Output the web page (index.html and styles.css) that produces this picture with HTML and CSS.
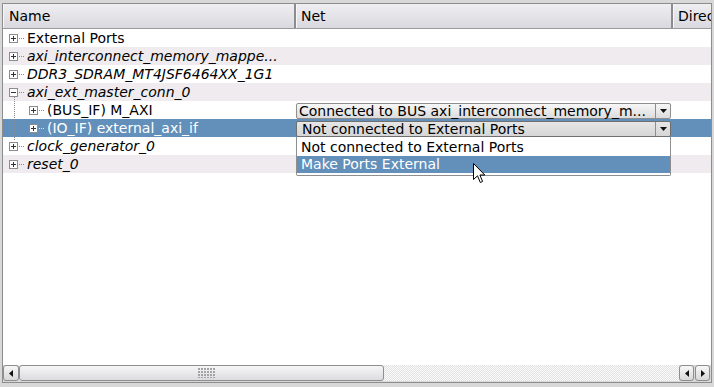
FILE: index.html
```html
<!DOCTYPE html>
<html>
<head>
<meta charset="utf-8">
<link rel="stylesheet" href="styles.css">
</head>
<body>
<div class="window">
  <div class="panel">
    <div class="header">
      <div class="hcell h-name">Name</div>
      <div class="hcell h-net">Net</div>
      <div class="hcell h-dir">Direc</div>
    </div>
    <div class="rows">
      <div class="row">
        <div class="c-name">
          <svg class="exp" width="9" height="9" viewBox="0 0 9 9"><rect x="0.5" y="0.5" width="8" height="8" fill="#fff" stroke="#8c8c8c"/><path d="M2 4.5H7M4.5 2V7" stroke="#333"/></svg>
          <span class="conn"></span><span class="label">External Ports</span>
        </div>
        <div class="c-net"></div><div class="c-dir"></div>
      </div>
      <div class="row alt">
        <div class="c-name">
          <svg class="exp" width="9" height="9" viewBox="0 0 9 9"><rect x="0.5" y="0.5" width="8" height="8" fill="#fff" stroke="#8c8c8c"/><path d="M2 4.5H7M4.5 2V7" stroke="#333"/></svg>
          <span class="conn"></span><span class="label it">axi_interconnect_memory_mappe...</span>
        </div>
        <div class="c-net"></div><div class="c-dir"></div>
      </div>
      <div class="row">
        <div class="c-name">
          <svg class="exp" width="9" height="9" viewBox="0 0 9 9"><rect x="0.5" y="0.5" width="8" height="8" fill="#fff" stroke="#8c8c8c"/><path d="M2 4.5H7M4.5 2V7" stroke="#333"/></svg>
          <span class="conn"></span><span class="label it">DDR3_SDRAM_MT4JSF6464XX_1G1</span>
        </div>
        <div class="c-net"></div><div class="c-dir"></div>
      </div>
      <div class="row alt">
        <div class="c-name line-down">
          <svg class="exp" width="9" height="9" viewBox="0 0 9 9"><rect x="0.5" y="0.5" width="8" height="8" fill="#fff" stroke="#8c8c8c"/><path d="M2 4.5H7" stroke="#333"/></svg>
          <span class="conn"></span><span class="label it">axi_ext_master_conn_0</span>
        </div>
        <div class="c-net"></div><div class="c-dir"></div>
      </div>
      <div class="row">
        <div class="c-name child line-full">
          <svg class="exp" width="9" height="9" viewBox="0 0 9 9"><rect x="0.5" y="0.5" width="8" height="8" fill="#fff" stroke="#8c8c8c"/><path d="M2 4.5H7M4.5 2V7" stroke="#333"/></svg>
          <span class="conn"></span><span class="label">(BUS_IF) M_AXI</span>
        </div>
        <div class="c-net">
          <div class="combo"><span class="combo-text">Connected to BUS axi_interconnect_memory_m...</span><span class="combo-btn"><svg width="7" height="4" viewBox="0 0 7 4"><path d="M0 0H7L3.5 4Z" fill="#111"/></svg></span></div>
        </div>
        <div class="c-dir"></div>
      </div>
      <div class="row sel">
        <div class="c-name child line-full">
          <svg class="exp" width="9" height="9" viewBox="0 0 9 9"><rect x="0.5" y="0.5" width="8" height="8" fill="#fff" stroke="#8c8c8c"/><path d="M2 4.5H7M4.5 2V7" stroke="#333"/></svg>
          <span class="conn"></span><span class="label">(IO_IF) external_axi_if</span>
        </div>
        <div class="c-net">
          <div class="combo open"><span class="combo-text">Not connected to External Ports</span><span class="combo-btn"><svg width="7" height="4" viewBox="0 0 7 4"><path d="M0 0H7L3.5 4Z" fill="#111"/></svg></span></div>
        </div>
        <div class="c-dir"></div>
      </div>
      <div class="row">
        <div class="c-name line-up">
          <svg class="exp" width="9" height="9" viewBox="0 0 9 9"><rect x="0.5" y="0.5" width="8" height="8" fill="#fff" stroke="#8c8c8c"/><path d="M2 4.5H7M4.5 2V7" stroke="#333"/></svg>
          <span class="conn"></span><span class="label it">clock_generator_0</span>
        </div>
        <div class="c-net"></div><div class="c-dir"></div>
      </div>
      <div class="row alt">
        <div class="c-name">
          <svg class="exp" width="9" height="9" viewBox="0 0 9 9"><rect x="0.5" y="0.5" width="8" height="8" fill="#fff" stroke="#8c8c8c"/><path d="M2 4.5H7M4.5 2V7" stroke="#333"/></svg>
          <span class="conn"></span><span class="label it">reset_0</span>
        </div>
        <div class="c-net"></div><div class="c-dir"></div>
      </div>
    </div>
    <div class="scrollbar">
      <div class="sb-btn"><svg width="4" height="7" viewBox="0 0 4 7"><path d="M4 0V7L0 3.5Z" fill="#111"/></svg></div>
      <div class="sb-track">
        <div class="sb-thumb"><span class="grip"></span></div>
      </div>
      <div class="sb-btn"><svg width="4" height="7" viewBox="0 0 4 7"><path d="M4 0V7L0 3.5Z" fill="#111"/></svg></div>
      <div class="sb-btn"><svg width="4" height="7" viewBox="0 0 4 7"><path d="M0 0V7L4 3.5Z" fill="#111"/></svg></div>
    </div>

    <div class="popup">
      <div class="item">Not connected to External Ports</div>
      <div class="item hot">Make Ports External</div>
    </div>
    <svg class="cursor" width="13" height="21" viewBox="0 0 13 21"><path d="M0.5 0.5V16.5L4.5 12.8L7.3 19.5L9.6 18.5L6.9 12H11.8Z" fill="#fff" stroke="#000" stroke-linejoin="round"/></svg>
  </div>
</div>
</body>
</html>
```

FILE: styles.css
```css
body {
  margin: 0;
  font-family: "DejaVu Sans", "Liberation Sans", sans-serif;
  font-size: 14px;
  color: #000;
}

.window {
  width: 714px;
  height: 387px;
  box-sizing: border-box;
  background: #d9d8d9;
  padding: 3px 2px 4px 2px;
  display: flex;
}

.panel {
  flex: 1;
  border: 1px solid #8d8d8d;
  background: #fff;
  display: flex;
  flex-direction: column;
  position: relative;
  overflow: hidden;
}

.header {
  display: flex;
  height: 24px;
  border-bottom: 1px solid #9a9a9e;
  background: linear-gradient(#efeff2, #d8d8de);
  flex-shrink: 0;
}

.hcell {
  line-height: 24px;
  padding-left: 5px;
  box-sizing: border-box;
  white-space: nowrap;
  overflow: hidden;
  border-left: 1px solid #f7f7f9;
}

.h-name {
  width: 293px;
  border-right: 2px solid #8c8c90;
}

.h-net {
  width: 377px;
  padding-left: 4px;
  border-right: 2px solid #8c8c90;
}

.h-dir {
  flex: 1;
  padding-left: 4px;
}

.rows {
  flex: 1;
}

.row {
  display: flex;
  height: 18px;
  line-height: 18px;
}

.row.alt {
  background: #efebef;
}

.row.sel {
  background: #6290ba;
  color: #fff;
}

.c-name {
  width: 293px;
  display: flex;
  align-items: center;
  padding-left: 6px;
  box-sizing: border-box;
  white-space: nowrap;
  overflow: hidden;
  background-repeat: no-repeat;
}

.c-name.child {
  padding-left: 26px;
}

.line-full {
  background-image: repeating-linear-gradient(to bottom, #8a8a8a 0 1px, transparent 1px 2px);
  background-position: 11px 0;
  background-size: 1px 18px;
}

.line-down {
  background-image: repeating-linear-gradient(to bottom, #8a8a8a 0 1px, transparent 1px 2px);
  background-position: 11px 14px;
  background-size: 1px 4px;
}

.line-up {
  background-image: repeating-linear-gradient(to bottom, #8a8a8a 0 1px, transparent 1px 2px);
  background-position: 11px 0;
  background-size: 1px 4px;
}

.exp {
  flex-shrink: 0;
  display: block;
}

.conn {
  width: 6px;
  height: 1px;
  margin-right: 3px;
  flex-shrink: 0;
  background: repeating-linear-gradient(to right, #8a8a8a 0 1px, transparent 1px 2px);
  background-position: 1px 0;
}

.row.sel .conn {
  background: repeating-linear-gradient(to right, #dfe8f0 0 1px, transparent 1px 2px);
  background-position: 1px 0;
}

.label.it {
  font-style: italic;
}

.c-net {
  width: 377px;
  flex-shrink: 0;
}

.c-dir {
  flex: 1;
}

.combo {
  margin-top: 2px;
  width: 375px;
  height: 16px;
  box-sizing: border-box;
  border: 1px solid #8e8e8e;
  border-radius: 2px;
  background: linear-gradient(#f7f7f7, #dcdcdc);
  display: flex;
  color: #000;
  line-height: 14px;
}

.combo.open {
  border-color: #707070;
  background: linear-gradient(#e6e6e6, #d6d6d6);
}

.combo-text {
  flex: 1;
  padding-left: 2px;
  white-space: nowrap;
}

.combo.open .combo-text {
  padding-left: 5px;
}

.combo-btn {
  width: 14px;
  border-left: 1px solid #8e8e8e;
  display: flex;
  align-items: center;
  justify-content: center;
}

.scrollbar {
  height: 16px;
  display: flex;
  flex-shrink: 0;
  background: #d9d8d9;
  padding-bottom: 1px;
  box-sizing: content-box;
}

.sb-btn {
  width: 15px;
  box-sizing: border-box;
  border: 1px solid #8e8e8e;
  border-radius: 3px;
  background: linear-gradient(#f7f7f7, #d8d8d8);
  display: flex;
  align-items: center;
  justify-content: center;
  margin-right: 1px;
}

.sb-btn:first-child {
  width: 16px;
  margin-right: 0;
}

.sb-track {
  flex: 1;
  background: repeating-conic-gradient(#e2e2e2 0 25%, #fbfbfb 0 50%) 0 0 / 2px 2px;
  display: flex;
}

.sb-thumb {
  width: 365px;
  box-sizing: border-box;
  border: 1px solid #8e8e8e;
  border-radius: 3px;
  background: linear-gradient(#f6f6f8, #dcdce0);
  display: flex;
  align-items: center;
  justify-content: center;
}

.grip {
  width: 18px;
  height: 10px;
  margin-left: 10px;
  background: radial-gradient(circle at 1px 1px, #a4a4a4 0.8px, transparent 1px) 0 0 / 3px 3px;
}

.popup {
  position: absolute;
  left: 293px;
  top: 133px;
  width: 375px;
  height: 39px;
  box-sizing: border-box;
  border: 1px solid #8e8e8e;
  border-top: 0;
  border-radius: 0 0 2px 2px;
  background: #fff;
  padding-top: 1px;
}

.item {
  height: 18px;
  line-height: 18px;
  padding-left: 4px;
  white-space: nowrap;
}

.item.hot {
  background: #6290ba;
  color: #fff;
  height: 17px;
  line-height: 17px;
}

.cursor {
  position: absolute;
  left: 470px;
  top: 159px;
}
```
